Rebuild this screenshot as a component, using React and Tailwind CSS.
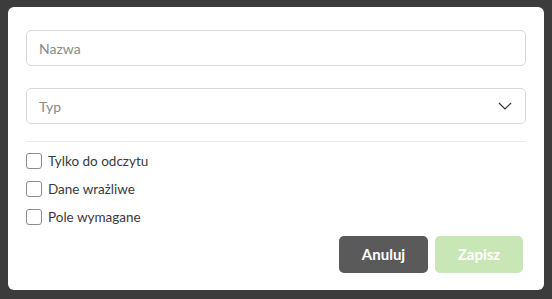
import React, { useState } from 'react';

const Checkbox = ({ label, checked, onChange }) => (
  <label className="flex items-center h-[28px] cursor-pointer select-none">
    <input
      type="checkbox"
      checked={checked}
      onChange={onChange}
      className="appearance-none w-[16px] h-[16px] border border-[#8c8c8c] rounded-[3px] bg-white checked:bg-[#6aa84f] m-0"
    />
    <span className="ml-[6px] text-[13.5px] text-[#3a3a3a]">{label}</span>
  </label>
);

const App = () => {
  const [flags, setFlags] = useState({ readonly: false, sensitive: false, required: false });

  const toggle = (key) => setFlags((f) => ({ ...f, [key]: !f[key] }));

  return (
    <div
      className="w-[552px] h-[299px] bg-[#3c3c3c] pt-[7px] pl-[8px]"
      style={{ fontFamily: 'Lato, "Noto Sans", sans-serif' }}
    >
      <div className="w-[536px] h-[283px] bg-white rounded-[6px] px-[18px] pt-[23px] flex flex-col">
        {/* Name */}
        <input
          type="text"
          placeholder="Nazwa"
          className="h-[36px] w-full border border-[#d9d9d9] rounded-[5px] px-[12px] text-[14px] text-[#333] placeholder:text-[#8a8a8a] outline-none"
        />

        {/* Type */}
        <div className="mt-[22px] h-[36px] w-full border border-[#d9d9d9] rounded-[5px] pl-[12px] pr-[12px] flex items-center justify-between">
          <span className="text-[14px] text-[#8a8a8a]">Typ</span>
          <svg width="14" height="8" viewBox="0 0 14 8" fill="none" className="mr-[1px]">
            <path d="M1 1l6 6 6-6" stroke="#333" strokeWidth="1.2" />
          </svg>
        </div>

        <div className="mt-[17px] border-t border-[#ebebeb]" />

        <div className="mt-[5px] flex flex-col">
          <Checkbox label="Tylko do odczytu" checked={flags.readonly} onChange={() => toggle('readonly')} />
          <Checkbox label="Dane wrażliwe" checked={flags.sensitive} onChange={() => toggle('sensitive')} />
          <Checkbox label="Pole wymagane" checked={flags.required} onChange={() => toggle('required')} />
        </div>

        <div className="mt-[5px] flex justify-end gap-[7px] pr-[3px]">
          <button className="w-[89px] h-[37px] rounded-[5px] bg-[#5a5a5a] text-white text-[15px] font-bold">
            Anuluj
          </button>
          <button disabled className="w-[88px] h-[37px] rounded-[5px] bg-[#c9e6b7] text-white text-[15px] font-bold">
            Zapisz
          </button>
        </div>
      </div>
    </div>
  );
};

export default App;
